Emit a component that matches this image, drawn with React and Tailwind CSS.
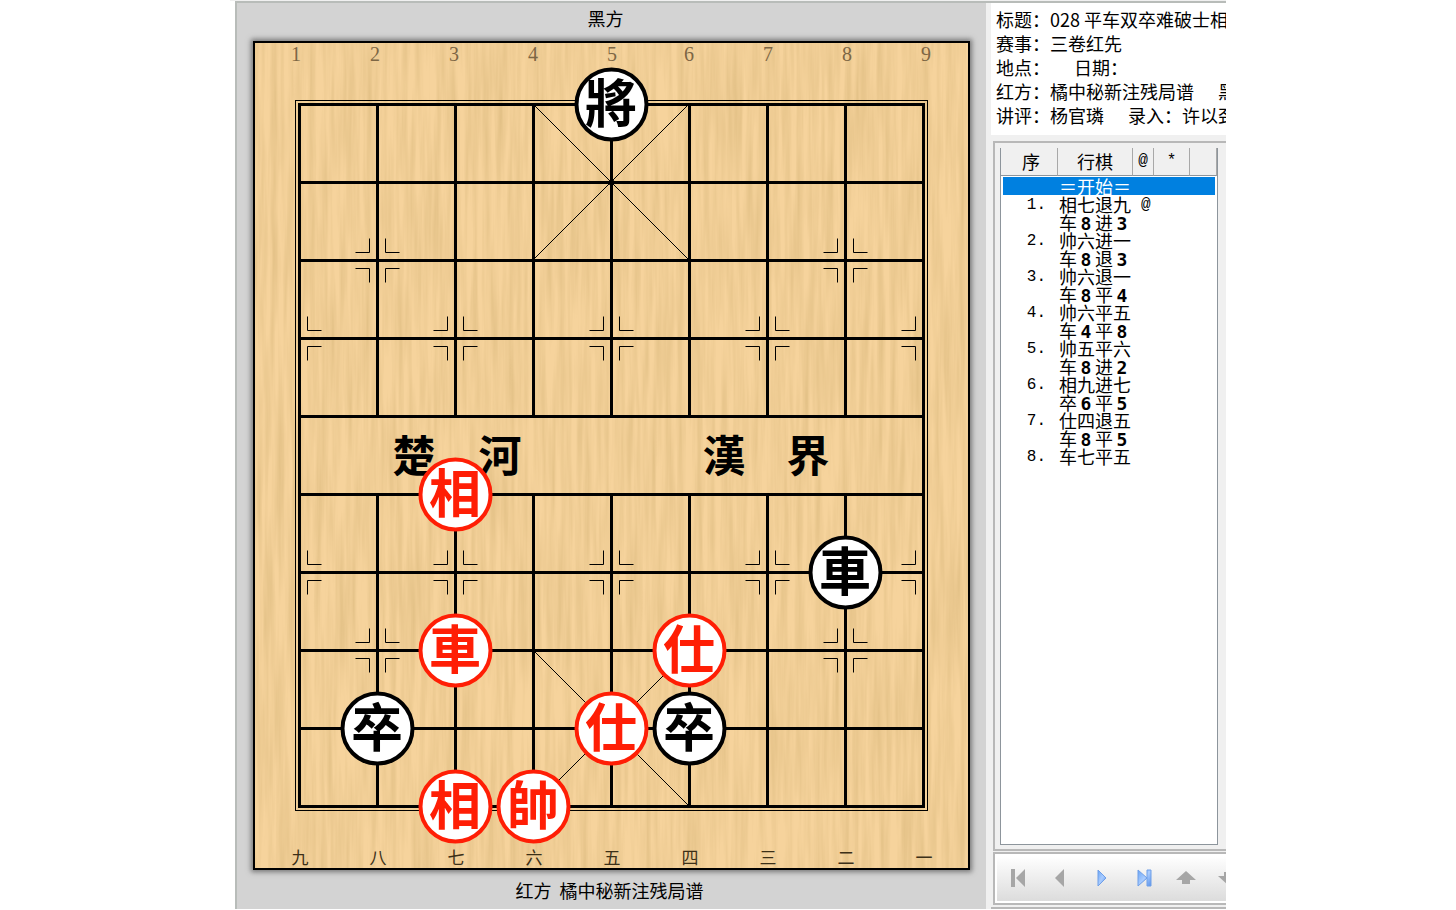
import { useState } from "react";
import clsx from "clsx";

const STEP = 78;
const colX = (c) => 46 + c * STEP;
const rowY = (r) => 63 + r * STEP;

const range = (n) => Array.from({ length: n }, (_, i) => i);

const PIECES = [
    { name: "將", side: "black", col: 4, row: 0 },
    { name: "相", side: "red", col: 2, row: 5 },
    { name: "車", side: "black", col: 7, row: 6 },
    { name: "車", side: "red", col: 2, row: 7 },
    { name: "仕", side: "red", col: 5, row: 7 },
    { name: "卒", side: "black", col: 1, row: 8 },
    { name: "仕", side: "red", col: 4, row: 8 },
    { name: "卒", side: "black", col: 5, row: 8 },
    { name: "相", side: "red", col: 2, row: 9 },
    { name: "帥", side: "red", col: 3, row: 9 },
];

const MARKS = [
    [1, 2], [7, 2], [1, 7], [7, 7],
    ...[3, 6].flatMap((row) => [0, 2, 4, 6, 8].map((col) => [col, row])),
];

const TOP_LABELS = ["1", "2", "3", "4", "5", "6", "7", "8", "9"];
const BOTTOM_LABELS = ["九", "八", "七", "六", "五", "四", "三", "二", "一"];

const RIVER = [
    { text: "楚", x: 161 },
    { text: "河", x: 247 },
    { text: "漢", x: 471 },
    { text: "界", x: 555 },
];

const MOVES = [
    { no: "", move: "＝开始＝" },
    { no: "1.", move: "相七退九", note: "@" },
    { no: "", move: "车8进3" },
    { no: "2.", move: "帅六进一" },
    { no: "", move: "车8退3" },
    { no: "3.", move: "帅六退一" },
    { no: "", move: "车8平4" },
    { no: "4.", move: "帅六平五" },
    { no: "", move: "车4平8" },
    { no: "5.", move: "帅五平六" },
    { no: "", move: "车8进2" },
    { no: "6.", move: "相九进七" },
    { no: "", move: "卒6平5" },
    { no: "7.", move: "仕四退五" },
    { no: "", move: "车8平5" },
    { no: "8.", move: "车七平五" },
];

const INFO = [
    ["标题：028 平车双卒难破士相"],
    ["赛事：三卷红先"],
    ["地点：", "日期："],
    ["红方：橘中秘新注残局谱", "黑"],
    ["讲评：杨官璘", "录入：许以劲"],
];

// corner ticks around a cannon or soldier point
const markPath = (col, row) => {
    const x = colX(col) + 0.5;
    const y = rowY(row) + 0.5;
    return [-1, 1]
        .filter((sx) => !(col === 0 && sx < 0) && !(col === 8 && sx > 0))
        .flatMap((sx) => [-1, 1].map((sy) => `M${x + sx * 8} ${y + sy * 22}V${y + sy * 8}H${x + sx * 22}`))
        .join("");
};

const Board = () => (
    <svg viewBox="0 0 717 829" className="block w-full shadow-[0_0_5px_2px_#777]" role="img" aria-label="棋盘">
        <defs>
            <filter id="grain" x="0" y="0" width="100%" height="100%">
                <feTurbulence type="fractalNoise" baseFrequency="0.16 0.008" numOctaves="3" seed="4" />
                <feColorMatrix values="0 0 0 0 0.62  0 0 0 0 0.42  0 0 0 0 0.16  0.8 0 0 0 -0.25" />
            </filter>
        </defs>
        <rect width="717" height="829" fill="#f6d39c" />
        <rect width="717" height="829" filter="url(#grain)" />
        <rect x="1" y="1" width="715" height="827" fill="none" stroke="#000" strokeWidth="2" />

        <g fill="#7d6644" fontSize="20" textAnchor="middle" className="font-['Liberation_Serif','Noto_Sans_CJK_SC',serif]">
            {TOP_LABELS.map((label, i) => <text key={label} x={43 + i * 79 - (i > 4 ? 2 : 0)} y="20">{label}</text>)}
        </g>
        <g fill="#3c3018" fontSize="17" textAnchor="middle" className="font-['Noto_Sans_CJK_SC',sans-serif]">
            {BOTTOM_LABELS.map((label, i) => <text key={label} x={47 + i * STEP} y="823">{label}</text>)}
        </g>

        <g stroke="#000" fill="none">
            <rect x="42.5" y="59.5" width="632" height="710" />
            <rect x="46.5" y="63.5" width="624" height="702" strokeWidth="3" />
            {range(8).map((i) => (
                <path key={i} strokeWidth="3" d={`M46 ${rowY(i + 1) + 0.5}H671`} />
            ))}
            {range(7).map((i) => (
                <path key={i} strokeWidth="3" d={`M${colX(i + 1) + 0.5} 63V376M${colX(i + 1) + 0.5} 453V766`} />
            ))}
            <path d={`M${colX(3)} ${rowY(0)}L${colX(5)} ${rowY(2)}M${colX(5)} ${rowY(0)}L${colX(3)} ${rowY(2)}`} />
            <path d={`M${colX(3)} ${rowY(7)}L${colX(5)} ${rowY(9)}M${colX(5)} ${rowY(7)}L${colX(3)} ${rowY(9)}`} />
            {MARKS.map(([col, row]) => <path key={`${col}-${row}`} d={markPath(col, row)} />)}
        </g>
        <circle cx={colX(4) + 0.5} cy={rowY(1) + 0.5} r="3" />

        <g fontSize="43" fontWeight="700" textAnchor="middle" className="font-['Noto_Sans_CJK_TC',sans-serif]">
            {RIVER.map((r) => <text key={r.text} x={r.x} y="431">{r.text}</text>)}
        </g>

        {PIECES.map((p) => {
            const color = p.side === "red" ? "#ff1e05" : "#000";
            return (
                <g key={`${p.col}-${p.row}`}>
                    <circle cx={colX(p.col) + 0.5} cy={rowY(p.row) + 0.5} r="35" fill="#fff" stroke={color} strokeWidth="4" />
                    <text x={colX(p.col)} y={rowY(p.row) + 19} fill={color} fontSize="52" fontWeight="700" textAnchor="middle" className="font-['Noto_Sans_CJK_TC',sans-serif]">
                        {p.name}
                    </text>
                </g>
            );
        })}
    </svg>
);

// every character takes one full-width cell, digits are bold
const MoveText = ({ text }) => (
    <>
        {text.split("").map((ch, i) => (
            <span key={i} className={clsx("inline-block w-[18px] text-center", /\d/.test(ch) && "font-['DejaVu_Sans_Mono',monospace] font-bold")}>
                {ch}
            </span>
        ))}
    </>
);

const MoveList = () => {
    const [current, setCurrent] = useState(0);

    return (
        <div className="flex-1 w-[218px] bg-white border border-t-0 border-[#8d959c]">
            <table className="w-full table-fixed border-separate border-spacing-0 text-[18px]">
                <colgroup>
                    <col className="w-[57px]" />
                    <col className="w-[75px]" />
                    <col className="w-[21px]" />
                    <col className="w-[36px]" />
                    <col />
                </colgroup>
                <thead>
                    <tr className="h-7 bg-[#f0f0f0] leading-6">
                        {["序", "行棋", "@", "*", ""].map((h, i) => (
                            <th key={i} className={clsx("p-0 pb-[2px] font-normal border-r border-b border-r-[#a8a8a8] border-b-[#8d959c]", i === 0 && "pl-1", i > 1 && "font-['Liberation_Mono',monospace] text-base")}>
                                {h}
                            </th>
                        ))}
                    </tr>
                </thead>
                <tbody>
                    <tr className="h-px"><td colSpan={5} className="p-0" /></tr>
                    {MOVES.map((m, i) => (
                        <tr key={i} onClick={() => setCurrent(i)} className={clsx("h-[18px] leading-[18px] whitespace-nowrap *:p-0 *:bg-clip-padding", i === current && "text-white *:bg-[#0080e0]")}>
                            <td className="border-l-2 border-transparent">
                                <div className="h-[18px] pr-3 text-right text-base leading-5 font-['Liberation_Mono',monospace]">{m.no}</div>
                            </td>
                            <td><div className="h-[18px] pl-px"><MoveText text={m.move} /></div></td>
                            <td><div className="h-[18px] pl-2 text-base leading-5 font-['Liberation_Mono',monospace]">{m.note}</div></td>
                            <td />
                            <td className="border-r-2 border-transparent" />
                        </tr>
                    ))}
                </tbody>
            </table>
        </div>
    );
};

const NAV = [
    { label: "第一步", color: "gray", d: "M5 2h4v18H5zM19 2v18l-9-9z" },
    { label: "上一步", color: "gray", d: "M16 2v18l-9-9z" },
    { label: "下一步", color: "blue", d: "M8 3v16l8-8z" },
    { label: "最后一步", color: "blue", d: "M6 3v16l9-8zM15 3h4v16h-4z" },
    { label: "上一局", color: "gray", d: "M12 4l10 9h-6v4H8v-4H2z" },
    { label: "下一局", color: "gray", d: "M12 18L2 9h6V5h8v4h6z" },
];

const Toolbar = () => (
    <div className="h-[53px] shrink-0 border-2 border-r-0 border-[#b8b8b8] bg-white p-[2px] pr-0 overflow-hidden">
        <div className="flex items-center h-full bg-linear-to-b from-white to-[#dcdcdc]">
            {NAV.map((n) => (
                <button key={n.label} type="button" aria-label={n.label} className="w-[42px] h-10 shrink-0 flex items-center justify-center">
                    <svg viewBox="0 0 24 24" className="size-6">
                        <defs>
                            <linearGradient id="navBlue" x1="0" y1="0" x2="1" y2="1">
                                <stop offset="0" stopColor="#6aa5f5" />
                                <stop offset="0.5" stopColor="#a9ccff" />
                                <stop offset="1" stopColor="#5b93ea" />
                            </linearGradient>
                        </defs>
                        <path d={n.d} fill={n.color === "blue" ? "url(#navBlue)" : "#a6a6a6"} stroke={n.color === "blue" ? "#6f9fe8" : "none"} />
                    </svg>
                </button>
            ))}
        </div>
    </div>
);

const App = () => (
    <div className="min-h-screen bg-white text-black text-[18px] font-['Noto_Sans_CJK_SC',sans-serif]">
        <div className="flex max-w-[996px] mx-auto pl-[5px] border-t border-[#f0f0f0]">
            <main className="flex-1 min-w-0 flex flex-col bg-[#d3d3d3] border-t-2 border-l-2 border-[#b8bcb9] pl-4 pr-4">
                <h1 className="h-[38px] pr-3 leading-[30px] text-center">黑方</h1>
                <Board />
                <h2 className="h-[39px] pr-1 leading-10 text-center">红方&nbsp; 橘中秘新注残局谱</h2>
            </main>
            <aside className="w-60 shrink-0 flex flex-col overflow-hidden bg-[#f0f0f0] border-t-2 border-t-[#b8bcb9] pl-[5px]">
                <div className="bg-white pl-[5px] pt-1 pb-2 leading-6 whitespace-nowrap overflow-hidden">
                    {INFO.map((parts, i) => (
                        <p key={i} className="flex gap-6">
                            {parts.map((p) => <span key={p} className="shrink-0">{p}</span>)}
                        </p>
                    ))}
                </div>
                <div className="flex-1 flex flex-col mt-[6px] ml-[2px] border-2 border-r-0 border-[#b8b8b8] p-[5px] pb-1">
                    <MoveList />
                </div>
                <div className="mt-px ml-[2px]">
                    <Toolbar />
                </div>
                <div className="h-1 border-b-2 border-[#b8b8b8]" />
            </aside>
        </div>
    </div>
);

export default App;
